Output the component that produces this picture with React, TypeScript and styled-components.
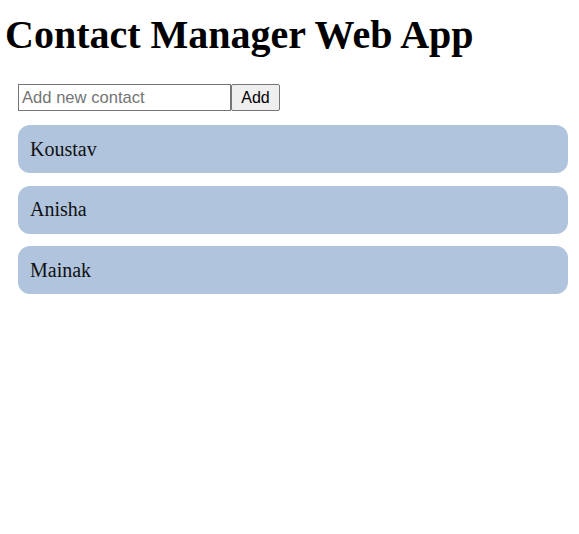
import React, { useState } from "react";
import styled, { createGlobalStyle } from "styled-components";

const Global = createGlobalStyle`
  html, body { margin: 0; padding: 0; background: #ffffff; }
  body { font-family: "Liberation Serif", "Times New Roman", serif; color: #000; }
`;

const Page = styled.div`
  display: flex;
  flex-direction: column;
  padding: 0 11px 0 0;
`;

const Title = styled.h1`
  margin: 12px 0 0 5px;
  font-family: "Liberation Serif", "Times New Roman", serif;
  font-size: 40px;
  font-weight: bold;
  line-height: 46px;
`;

const Content = styled.div`
  display: flex;
  flex-direction: column;
  padding: 26px 0 0 18px;
`;

const Form = styled.form`
  display: flex;
  align-items: stretch;
  height: 27px;
`;

const Input = styled.input`
  box-sizing: border-box;
  width: 213px;
  height: 27px;
  margin: 0;
  padding: 0 3px;
  border: 1px solid #767676;
  border-radius: 0;
  font-family: "Liberation Sans", Arial, sans-serif;
  font-size: 16.6px;
  color: #000;
  &::placeholder { color: #757575; }
  &:focus { outline: none; }
`;

const AddButton = styled.button`
  box-sizing: border-box;
  width: 49px;
  height: 27px;
  margin: 0;
  padding: 0;
  border: 1px solid #767676;
  border-radius: 2px;
  background: #efefef;
  font-family: "Liberation Sans", Arial, sans-serif;
  font-size: 16px;
  color: #000;
`;

const List = styled.ul`
  list-style: none;
  margin: 14px 0 0 0;
  padding: 0;
  display: flex;
  flex-direction: column;
  gap: 12.5px;
`;

const Item = styled.li`
  box-sizing: border-box;
  height: 48px;
  display: flex;
  align-items: center;
  padding: 0 12px;
  background: #b0c4de;
  border-radius: 12px;
  font-family: "Liberation Serif", "Times New Roman", serif;
  font-size: 20px;
  color: #111;
`;

export default function App() {
  const [contacts, setContacts] = useState<string[]>(["Koustav", "Anisha", "Mainak"]);
  const [value, setValue] = useState("");
  return (
    <Page>
      <Global />
      <Title>Contact Manager Web App</Title>
      <Content>
        <Form
          onSubmit={(e) => {
            e.preventDefault();
            if (value.trim()) {
              setContacts([...contacts, value.trim()]);
              setValue("");
            }
          }}
        >
          <Input
            placeholder="Add new contact"
            value={value}
            onChange={(e) => setValue(e.target.value)}
          />
          <AddButton type="submit">Add</AddButton>
        </Form>
        <List>
          {contacts.map((c) => (
            <Item key={c}>{c}</Item>
          ))}
        </List>
      </Content>
    </Page>
  );
}
